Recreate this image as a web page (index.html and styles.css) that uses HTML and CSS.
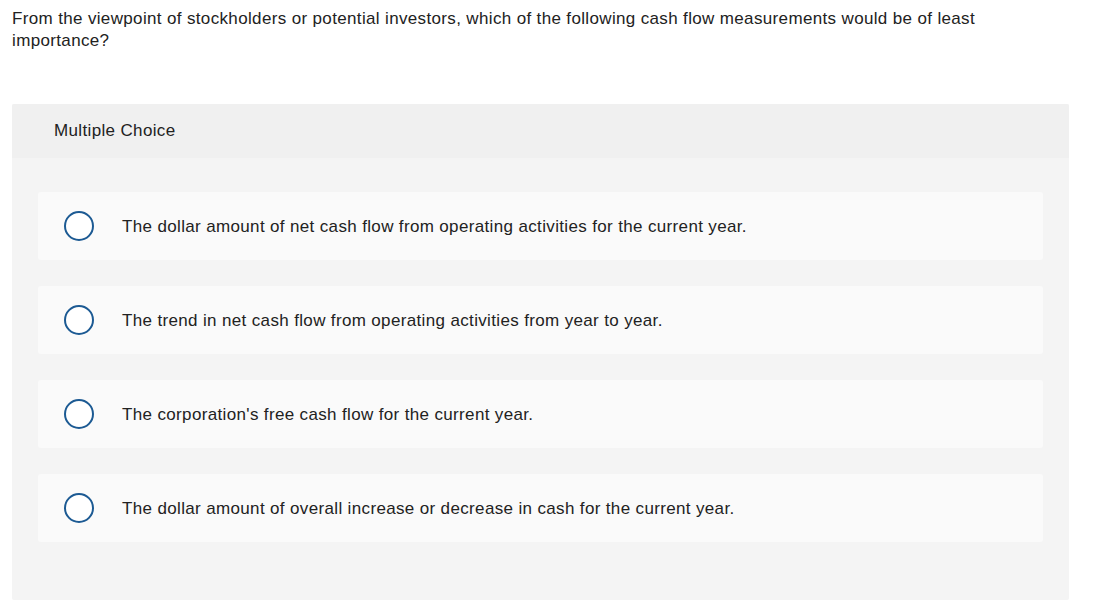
FILE: index.html
```html
<!DOCTYPE html>
<html>
<head>
<meta charset="utf-8">
<link rel="stylesheet" href="styles.css">
</head>
<body>
<div class="question">From the viewpoint of stockholders or potential investors, which of the following cash flow measurements would be of least importance?</div>
<div class="panel">
  <div class="panel-head">Multiple Choice</div>
  <div class="choices">
    <div class="choice"><span class="radio"></span><span class="label">The dollar amount of net cash flow from operating activities for the current year.</span></div>
    <div class="choice"><span class="radio"></span><span class="label">The trend in net cash flow from operating activities from year to year.</span></div>
    <div class="choice"><span class="radio"></span><span class="label">The corporation's free cash flow for the current year.</span></div>
    <div class="choice"><span class="radio"></span><span class="label">The dollar amount of overall increase or decrease in cash for the current year.</span></div>
  </div>
</div>
</body>
</html>
```

FILE: styles.css
```css
html, body { margin: 0; padding: 0; background: #fff; }
body {
  font-family: "Liberation Sans", Arial, sans-serif;
  color: #222;
  padding: 8px 12px 0 12px;
  width: 1057px;
  font-size: 17px;
  letter-spacing: 0.35px;
}
.question {
  line-height: 22px;
  width: 1000px;
}
.panel {
  margin-top: 52px;
  background: #f4f4f4;
  border-radius: 2px;
  padding-bottom: 58px;
}
.panel-head {
  background: #f0f0f0;
  height: 54px;
  box-sizing: border-box;
  padding: 16px 0 0 42px;
  line-height: 22px;
  border-radius: 2px 2px 0 0;
}
.choices {
  display: flex;
  flex-direction: column;
  gap: 26px;
  padding: 34px 26px 0 26px;
}
.choice {
  background: #fafafa;
  height: 68px;
  border-radius: 3px;
  display: flex;
  align-items: center;
  padding-left: 26px;
}
.radio {
  width: 30px;
  height: 30px;
  box-sizing: border-box;
  border: 2px solid #1c5a93;
  border-radius: 50%;
  background: #fff;
  flex: none;
}
.label {
  margin-left: 28px;
  padding-top: 2px;
  line-height: 22px;
}
```
